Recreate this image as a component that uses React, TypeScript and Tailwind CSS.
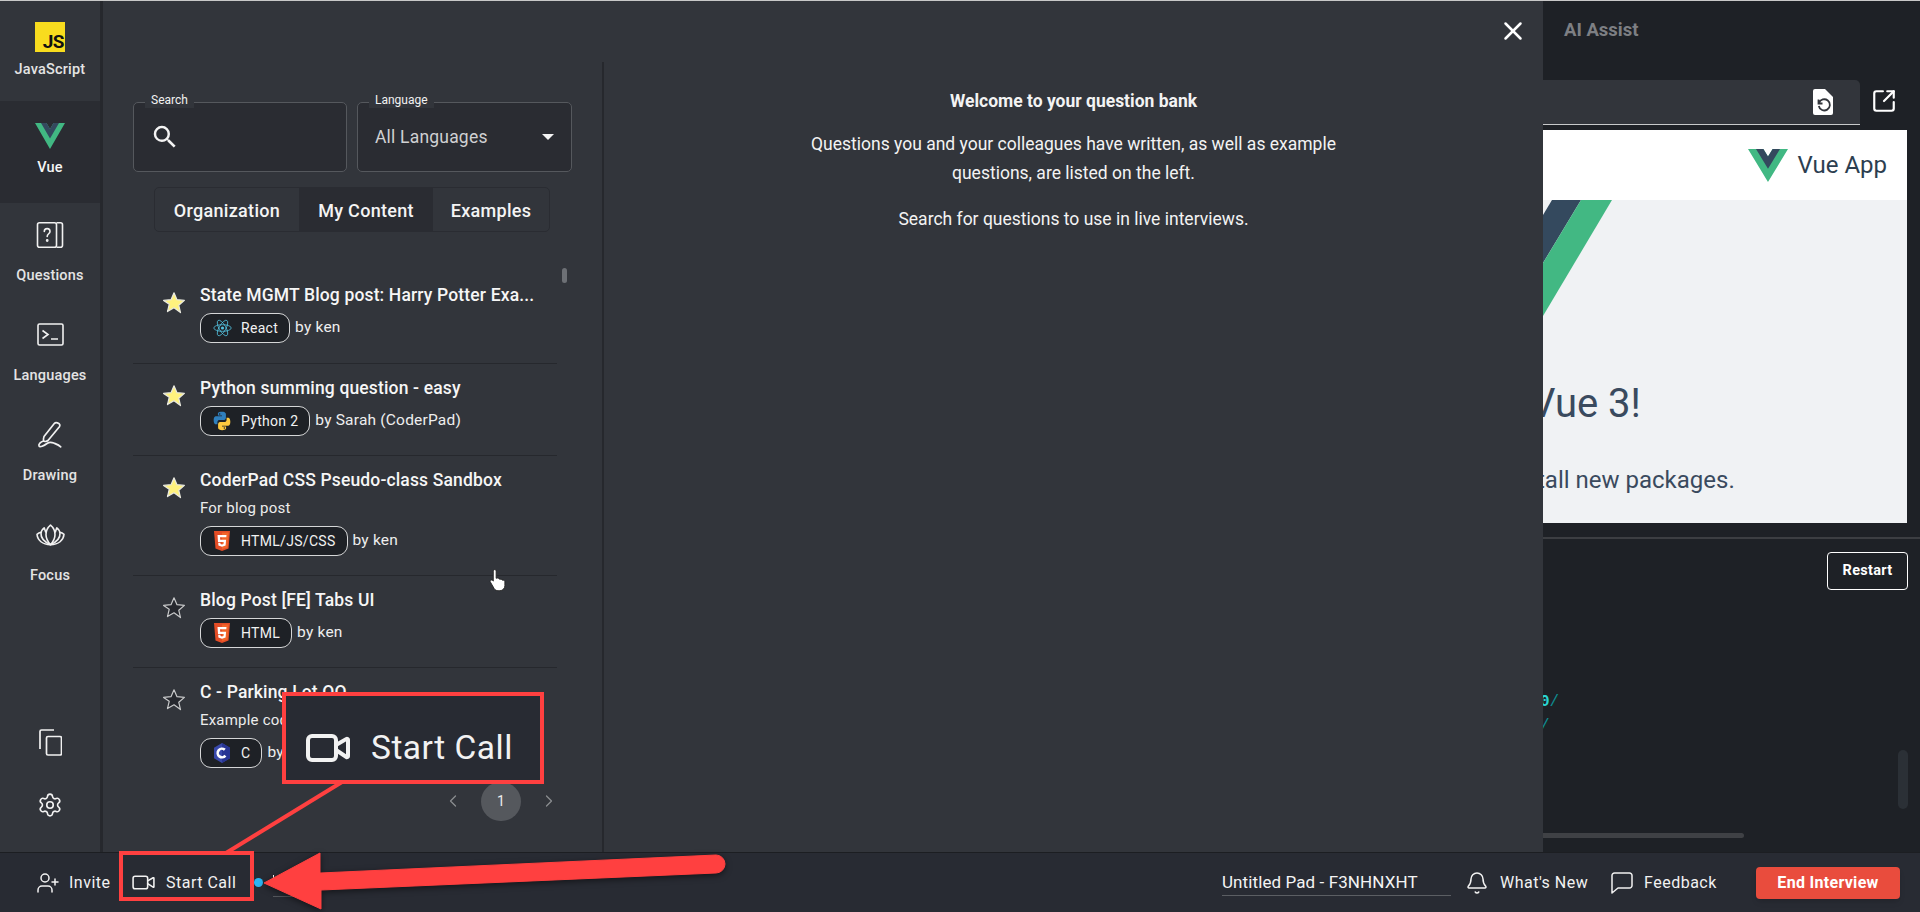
import React from "react";
import { X, UserPlus, Video, Bell, Settings, ChevronLeft, ChevronRight, SquareArrowOutUpRight } from "lucide-react";

const VueLogo = ({ w, h }: { w: number; h: number }) => (
  <svg width={w} height={h} viewBox="0 0 261.76 226.69" preserveAspectRatio="none">
    <path d="M161.096.001l-30.225 52.351L100.647.001H-.005l130.876 226.688L261.749.001z" fill="#41b883" />
    <path d="M161.096.001l-30.225 52.351L100.647.001H52.346l78.525 136.01L209.398.001z" fill="#34495e" />
  </svg>
);

const Star = ({ on }: { on: boolean }) => (
  <svg width="24" height="24" viewBox="0 0 24 24" className="mt-[7px] ml-[-1px] shrink-0">
    <path
      d="M12 1.8l3 6.9 7.4.7-5.6 4.9 1.7 7.3L12 16.8l-6.5 3.8 1.7-7.3L1.6 9.4 9 8.7z"
      fill={on ? "#fff27e" : "#26282e"}
      stroke={on ? "#e9e9e0" : "#c9cacb"}
      strokeWidth="1.2"
      strokeLinejoin="round"
    />
  </svg>
);

const ReactIcon = () => (
  <svg width="19" height="18" viewBox="-12 -11 24 22" fill="none" stroke="#53c1de" strokeWidth="1">
    <circle r="2" fill="#53c1de" stroke="none" />
    <ellipse rx="11" ry="4.2" />
    <ellipse rx="11" ry="4.2" transform="rotate(60)" />
    <ellipse rx="11" ry="4.2" transform="rotate(120)" />
  </svg>
);

const PythonIcon = () => (
  <svg width="20" height="20" viewBox="0 0 24 24">
    <path d="M11.9 1C6.8 1 7.1 3.2 7.1 3.2v2.3H12v.7H5.2S2 5.8 2 11s2.8 5 2.8 5h1.7v-2.4s-.1-2.8 2.8-2.8h4.8s2.6 0 2.6-2.6V3.8S16.700 1 11.900 1zM9.200 2.600a.9.9 0 110 1.800.9.9 0 010-1.800z" fill="#2f7fbd" />
    <path d="M12.100 23c5.100 0 4.800-2.200 4.800-2.200v-2.300H12v-.7h6.800S22 18.200 22 13s-2.800-5-2.800-5h-1.700v2.400s.1 2.800-2.800 2.800H9.900s-2.600 0-2.600 2.600v4.400S7.300 23 12.100 23zm2.700-1.600a.9.9 0 110-1.800.9.9 0 010 1.800z" fill="#fdc93f" />
  </svg>
);

const HtmlIcon = () => (
  <svg width="18" height="20" viewBox="0 0 18 20">
    <path d="M1 0h16l-1.500 17.500L9 20l-6.500-2.500z" fill="#e44d26" />
    <path d="M9 1.500h6.600l-1.200 14.900L9 18.300z" fill="#f16529" />
    <path d="M4.500 4h9l-.2 2.300H7l.2 2.400h5.900l-.5 5.800L9 15.700l-3.600-1.200-.2-2.700h2.200l.1 1.200L9 13.500l1.500-.5.2-2.100H5z" fill="#fff" />
  </svg>
);

const CIcon = () => (
  <svg width="18" height="20" viewBox="0 0 18 20">
    <path d="M9 0l8 4.700v10.600L9 20l-8-4.700V4.700z" fill="#3949ab" />
    <path d="M9 0l8 4.700v10.600L9 20z" fill="#283593" />
    <circle cx="9" cy="10" r="4.300" fill="none" stroke="#fff" strokeWidth="2.600" strokeDasharray="20 7" transform="rotate(38 9 10)" />
  </svg>
);

const Badge = ({ icon, label }: { icon: React.ReactNode; label: string }) => (
  <span className="inline-flex h-[30px] items-center rounded-[11px] border border-[#d5d6d7] bg-[#1e2126] pl-[11px] pr-[11px] text-[14px] tracking-[0.3px] text-[#f1f1f1]">
    <span className="flex w-[20px] justify-center">{icon}</span>
    <span className="ml-[9px]">{label}</span>
  </span>
);

type Q = { title: string; on: boolean; desc?: string; icon: React.ReactNode; lang: string; by: string };

const questions: Q[] = [
  { title: "State MGMT Blog post: Harry Potter Exa...", on: true, icon: <ReactIcon />, lang: "React", by: "by ken" },
  { title: "Python summing question - easy", on: true, icon: <PythonIcon />, lang: "Python 2", by: "by Sarah (CoderPad)" },
  { title: "CoderPad CSS Pseudo-class Sandbox", on: true, desc: "For blog post", icon: <HtmlIcon />, lang: "HTML/JS/CSS", by: "by ken" },
  { title: "Blog Post [FE] Tabs UI", on: false, icon: <HtmlIcon />, lang: "HTML", by: "by ken" },
  { title: "C - Parking Lot OO", on: false, desc: "Example code", icon: <CIcon />, lang: "C", by: "by ken" },
];

const QuestionsIcon = () => (
  <svg width="28" height="28" viewBox="0 0 28 28" fill="none" stroke="#f1f1f1" strokeWidth="1.600">
    <rect x="1.500" y="1.800" width="19" height="24.500" rx="2" />
    <path d="M20.500 1.800h4a2 2 0 012 2v20.500a2 2 0 01-2 2h-4" />
    <path d="M8.300 10.500c0-3.800 5.700-3.800 5.700 0 0 2.300-2.800 2.300-2.800 5" strokeLinecap="round" />
    <circle cx="11.200" cy="19.500" r="0.600" fill="#f1f1f1" />
  </svg>
);

const TerminalIcon = () => (
  <svg width="27" height="23" viewBox="0 0 27 23" fill="none" stroke="#f1f1f1" strokeWidth="1.600">
    <rect x="1" y="1" width="25" height="21" rx="1.500" />
    <path d="M5.500 7.500l5.500 4-5.500 4M14 16h7" />
  </svg>
);

const DrawIcon = () => (
  <svg width="26" height="28" viewBox="0 0 26 28" fill="none" stroke="#f1f1f1" strokeWidth="1.700" strokeLinecap="round" strokeLinejoin="round">
    <path d="M7 15.500L17.500 2.300c1.200-1.300 4.800-.3 5.300 1.500.2.700 0 1.300-.4 1.900L11 19.500c-1.600 1.300-4 1.200-4.300.5-.4-.8-.2-3 .3-4.500z" />
    <path d="M6.500 20c-2.800 1-5.300 3.200-4.500 5 .8 1.700 5-.2 8-2.500 2.300-1.700 4.300-1.500 6.700-.5 2.700 1.100 5.300 2 7 3.800" />
  </svg>
);

const LotusIcon = () => (
  <svg width="29" height="22" viewBox="0 0 29 22" fill="none" stroke="#f1f1f1" strokeWidth="1.600" strokeLinejoin="round">
    <path d="M14.500 1.200c3 2.500 4.500 6 4.500 9.500s-1.800 7-4.500 10c-2.700-3-4.500-6.500-4.500-10s1.500-7 4.500-9.500z" />
    <path d="M9.800 8.500C9.300 6.800 8.800 5 8.200 3.800 6.500 5 5.200 7 5 9.500c-.2 3.500 2.500 8 9.500 11.200M19.200 8.500c.5-1.700 1-3.500 1.600-4.700 1.700 1.200 3 3.200 3.200 5.700.2 3.500-2.500 8-9.500 11.200" />
    <path d="M5 8.200C3.500 8.500 2.200 9.200 1 10.300c.5 6 5.500 10.400 13.500 10.400 8 0 13-4.400 13.500-10.400-1.200-1.100-2.500-1.800-4-2.100" />
  </svg>
);

const CopyIcon = () => (
  <svg width="23" height="27" viewBox="0 0 23 27" fill="none" stroke="#f1f1f1" strokeWidth="1.700" strokeLinejoin="round">
    <rect x="7.500" y="7.500" width="15" height="18.500" rx="1.500" />
    <path d="M1 20V2.500A1.500 1.500 0 012.500 1H15" />
  </svg>
);

const SearchIcon = () => (
  <svg width="30" height="30" viewBox="0 0 24 24" fill="#f4f4f4">
    <path d="M15.500 14h-.79l-.28-.27A6.471 6.471 0 0 0 16 9.500 6.500 6.500 0 1 0 9.500 16c1.610 0 3.090-.59 4.230-1.570l.27.28v.79l5 4.990L20.490 19l-4.990-5zm-6 0C7.010 14 5 11.990 5 9.500S7.010 5 9.500 5 14 7.010 14 9.500 11.990 14 9.500 14z" />
  </svg>
);

const FileReloadIcon = () => (
  <svg width="20" height="26" viewBox="0 0 20 26">
    <path d="M2 0h10l8 8v16a2 2 0 01-2 2H2a2 2 0 01-2-2V2a2 2 0 012-2z" fill="#fff" />
    <path d="M5.500 10.500v4h4M6 14a5.600 5.600 0 11-.2 3" fill="none" stroke="#32353b" strokeWidth="1.800" />
  </svg>
);

const FeedbackIcon = () => (
  <svg width="22" height="22" viewBox="0 0 22 22" fill="none" stroke="#f1f1f1" strokeWidth="1.500" strokeLinejoin="round">
    <path d="M3.500 1h15a2.500 2.500 0 012.500 2.500v10a2.500 2.500 0 01-2.500 2.500H7L1 21V3.500A2.500 2.500 0 013.500 1z" />
  </svg>
);

const NavItem = ({ icon, label, active, h }: { icon: React.ReactNode; label: string; active?: boolean; h: string }) => (
  <div className={`flex flex-col items-center justify-start ${h} ${active ? "bg-[#2a2c32] text-[#f5f5f5]" : "text-[#e4e4e4]"}`}>
    {icon}
    <span className="text-[14.500px] leading-[20px] tracking-[0.2px] font-medium">{label}</span>
  </div>
);

export default function App() {
  return (
    <div className="relative flex h-[912px] w-[1920px] flex-col overflow-hidden bg-[#1e2126] font-[Roboto,sans-serif] text-[#f4f4f4]">
      <div className="h-px shrink-0 bg-[#c8c8c8]" />
      <div className="flex min-h-0 flex-1">
        {/* Question bank modal */}
        <div className="flex w-[1543px] shrink-0 bg-[#32353b]">
          <aside className="flex w-[103px] shrink-0 flex-col border-r-[3px] border-[#26282d]">
            <NavItem
              h="h-[100px] pt-[21px]"
              label="JavaScript"
              icon={
                <div className="mb-[8px] flex h-[30px] w-[30px] items-end justify-end bg-[#f8dc1e] pb-[1px] pr-[1px] text-[19px] font-bold leading-[19px] tracking-[-0.5px] text-[#111]">
                  JS
                </div>
              }
            />
            <NavItem
              active
              h="h-[102px] pt-[22px]"
              label="Vue"
              icon={
                <div className="mb-[9px]">
                  <VueLogo w={30} h={26} />
                </div>
              }
            />
            <NavItem h="h-[101px] pt-[18px]" label="Questions" icon={<div className="mb-[17px]"><QuestionsIcon /></div>} />
            <NavItem h="h-[100px] pt-[19px]" label="Languages" icon={<div className="mb-[20px]"><TerminalIcon /></div>} />
            <NavItem h="h-[100px] pt-[17px]" label="Drawing" icon={<div className="mb-[17px]"><DrawIcon /></div>} />
            <NavItem h="h-[100px] pt-[20px]" label="Focus" icon={<div className="mb-[20px]"><LotusIcon /></div>} />
            <div className="mt-auto mb-[34px] flex flex-col items-center gap-[36px]">
              <CopyIcon />
              <Settings size={26} strokeWidth={1.5} className="text-[#f1f1f1]" />
            </div>
          </aside>

          <section className="flex w-[499px] shrink-0 flex-col pl-[30px] pt-[101px]">
            <div className="flex gap-[10px]">
              <div className="relative flex h-[70px] w-[214px] items-center rounded-[5px] border border-[#55585d] bg-[#2a2c32] pl-[16px]">
                <span className="absolute left-[11px] top-[-10px] bg-[#32353b] px-[6px] text-[12px] leading-[15px] text-[#f1f1f1]">Search</span>
                <SearchIcon />
              </div>
              <div className="relative flex h-[70px] w-[215px] items-center justify-between rounded-[5px] border border-[#55585d] bg-[#2a2c32] pl-[17px] pr-[17px]">
                <span className="absolute left-[11px] top-[-10px] bg-[#32353b] px-[6px] text-[12px] leading-[15px] text-[#f1f1f1]">Language</span>
                <span className="text-[17.500px] tracking-[0.2px] text-[#d0d1d3]">All Languages</span>
                <span className="h-0 w-0 border-x-[6px] border-t-[6px] border-x-transparent border-t-[#f4f4f4]" />
              </div>
            </div>

            <div className="ml-[21px] mt-[15px] flex h-[45px] w-[396px] rounded-[5px] border border-[#2a2c32] pb-0 text-[18px] font-medium tracking-[0.3px] text-[#f4f4f4]">
              <div className="flex w-[144px] items-center justify-center pt-[2px]">Organization</div>
              <div className="flex w-[134px] items-center justify-center bg-[#2a2c32] pt-[2px]">My Content</div>
              <div className="flex flex-1 items-center justify-center pt-[2px]">Examples</div>
            </div>

            <div className="relative mt-[39px] h-[511px] w-[424px]">
              <div className="absolute left-[429px] top-[-3px] h-[15px] w-[5px] rounded-full bg-[#6d7075]" />
              <div className="h-full overflow-hidden">
                {questions.map((q, i) => (
                  <div key={q.title} className={`flex gap-[14px] pl-[30px] pr-[10px] pt-[13px] ${i === 0 ? "pb-[20px]" : "pb-[19px]"} ${i < 4 ? "border-b border-[#26282d]" : ""}`}>
                    <Star on={q.on} />
                    <div className="flex min-w-0 flex-col gap-[7px]">
                      <div className="whitespace-nowrap text-[17.500px] font-medium leading-[22px] tracking-[0.15px] text-[#f6f6f6]">{q.title}</div>
                      {q.desc && <div className="text-[15px] leading-[21px] tracking-[0.2px] text-[#ececec]">{q.desc}</div>}
                      <div className="flex items-center gap-[5px] text-[15.500px] tracking-[0.2px] text-[#eeeeee]">
                        <Badge icon={q.icon} label={q.lang} />
                        <span className="whitespace-nowrap">{q.by}</span>
                      </div>
                    </div>
                  </div>
                ))}
              </div>
            </div>

            <div className="flex h-[38px] w-[426px] items-center justify-end">
              <ChevronLeft size={20} strokeWidth={1.500} className="text-[#8b8d90]" />
              <span className="mx-[18px] flex h-[39px] w-[40px] items-center justify-center rounded-full bg-[#55585d] text-[14px] text-[#eeeeee]">1</span>
              <ChevronRight size={20} strokeWidth={1.500} className="text-[#8b8d90]" />
            </div>
          </section>

          <section className="relative flex min-w-0 flex-1 pt-[61px]">
            <div className="w-[2px] shrink-0 bg-[#26282d]" />
            <div className="flex flex-1 flex-col items-center pt-[25px] text-center text-[17.500px] leading-[29px] text-[#f3f3f3]">
              <div className="text-[17.500px] font-bold">Welcome to your question bank</div>
              <div className="mt-[14px] w-[560px]">
                Questions you and your colleagues have written, as well as example questions, are listed on the left.
              </div>
              <div className="mt-[17px]">Search for questions to use in live interviews.</div>
            </div>
            <X size={30} strokeWidth={2} className="absolute right-[15px] top-[15px] text-white" />
          </section>
        </div>

        {/* Right, behind the modal */}
        <div className="relative flex min-w-0 flex-1 flex-col overflow-hidden">
          <div className="flex h-[79px] shrink-0 items-start pl-[21px] pt-[18px] text-[18.500px] font-bold leading-[22px] text-[#7d7f83]">AI Assist</div>
          <div className="flex h-[45px] shrink-0">
            <div className="flex w-[317px] items-center justify-end rounded-tr-[5px] border-b border-[#c8c9ca] bg-[#32353b] pr-[27px]">
              <FileReloadIcon />
            </div>
            <SquareArrowOutUpRight size={26} strokeWidth={2} className="ml-[11px] mt-[8px] text-white" />
          </div>
          <div className="mt-[5px] flex h-[393px] w-[364px] shrink-0 flex-col">
            <div className="flex h-[70px] shrink-0 items-center justify-end gap-[10px] bg-white pr-[20px] text-[24px] text-[#2c3e50]">
              <VueLogo w={40} h={33} />
              <span>Vue App</span>
            </div>
            <div className="relative flex-1 bg-[#f0f2f4] text-[#3a4a5e]">
              <svg width="70" height="118" viewBox="0 0 70 118" className="absolute left-0 top-0">
                <polygon points="9,0 38,0 0,63 0,15" fill="#34495e" />
                <polygon points="38,0 69,0 0,116 0,63" fill="#42b883" />
              </svg>
              <div className="ml-[-13px] pt-[181px] text-[40px] leading-[46px] whitespace-nowrap">Vue 3!</div>
              <div className="ml-[-6px] mt-[39px] text-[24px] leading-[28px] whitespace-nowrap">tall new packages.</div>
            </div>
          </div>
          <div className="mt-[14px] h-[2px] shrink-0 bg-[#3c3e42]" />
          <div className="relative flex-1">
            <div className="flex justify-end pr-[12px] pt-[13px]">
              <div className="flex h-[38px] w-[81px] items-center justify-center rounded-[4px] border border-white text-[14.500px] font-bold tracking-[0.3px] text-white">Restart</div>
            </div>
            <div className="mt-[100px] font-['Liberation_Mono',monospace] text-[16px] leading-[24px]">
              <div className="ml-[-3px] font-bold text-[#2ad4d4]">
                0<span className="font-normal text-[#0e8c90]">/</span>
              </div>
              <div className="ml-[-3px] text-[#0e8c90]">/</div>
            </div>
            <div className="absolute right-[12px] top-[211px] h-[59px] w-[10px] rounded-[5px] bg-[#2b3036]" />
            <div className="absolute left-0 top-[294px] h-[5px] w-[201px] rounded-r-full bg-[#3f4145]" />
          </div>
        </div>
      </div>

      {/* Footer */}
      <footer className="flex h-[60px] shrink-0 items-center border-t border-[#1c1e22] bg-[#282b33] pl-[36px] pr-[20px] text-[16px] tracking-[0.5px] text-[#f2f2f2]">
        <UserPlus size={24} strokeWidth={1.500} className="shrink-0" />
        <span className="ml-[9px] w-[41px] whitespace-nowrap">Invite</span>
        <Video size={25} strokeWidth={1.500} className="ml-[21px] shrink-0" />
        <span className="ml-[10px] w-[70px] whitespace-nowrap">Start Call</span>
        <span className="ml-[18px] h-[9px] w-[9px] shrink-0 rounded-full bg-[#2bb5f2]" />
        <div className="ml-[10px] mb-[15px] h-[24px] w-[40px] shrink-0 self-end border-b border-[#55585d] pt-[2px]">
          <div className="h-[8px] w-[1px] bg-white" />
        </div>
        <div className="ml-[909px] w-[229px] shrink-0 border-b border-[#5b5e63] pb-[1px] text-[17px] leading-[24px] tracking-[0.1px] text-[#f4f4f4]">Untitled Pad - F3NHNXHT</div>
        <Bell size={24} strokeWidth={1.500} className="ml-[14px] shrink-0" />
        <span className="ml-[11px] w-[88px] whitespace-nowrap">What's New</span>
        <div className="ml-[23px] shrink-0"><FeedbackIcon /></div>
        <span className="ml-[11px] whitespace-nowrap">Feedback</span>
        <div className="ml-auto flex h-[32px] w-[144px] shrink-0 items-center justify-center rounded-[4px] bg-[#e94c3d] text-[16px] font-bold tracking-[0.3px] text-white shadow-md">End Interview</div>
      </footer>

      {/* Annotations over the screenshot */}
      <svg width="1920" height="912" className="pointer-events-none absolute left-0 top-0">
        <line x1="342" y1="782" x2="226" y2="853" stroke="#ff4040" strokeWidth="4" />
        <path
          d="M264 883 L320 853 L320 873 L716 855 A9 9 0 0 1 716 873 L321 890 L321 909 Z"
          fill="#ff4040"
          stroke="#ff4040"
          strokeLinejoin="round"
          style={{ filter: "drop-shadow(0 2px 3px rgba(0,0,0,.5))" }}
        />
      </svg>
      <div className="absolute left-[119px] top-[851px] h-[50px] w-[135px] border-[4px] border-[#ff4040]" />
      <div className="absolute left-[282px] top-[692px] flex h-[92px] w-[262px] items-center border-[4px] border-[#ff4040] bg-[#282b33] pl-[18px] pt-[20px] text-[33.500px] leading-[40px] tracking-[0.5px] text-[#f2f2f2]">
        <Video size={48} strokeWidth={2} className="shrink-0" />
        <span className="ml-[19px] whitespace-nowrap">Start Call</span>
      </div>
      <svg width="18" height="24" viewBox="0 0 16 22" className="absolute left-[489px] top-[568px]">
        <path d="M5 1.500c.8 0 1.300.6 1.300 1.400v6.500l.7-.1c.8-.2 1.800.1 2 .8l1 .2c.8-.2 1.500.2 1.700.7l.8.2c1-.2 1.800.5 1.800 1.400v3.500c0 2.500-2 4.700-4.500 4.700H8c-1.500 0-2.700-.7-3.500-1.900L1 12.800c-.5-.8 0-1.600.8-1.800.7-.1 1.300.3 1.900 1V2.900c0-.8.600-1.400 1.300-1.400z" fill="#fff" stroke="#222" strokeWidth="0.800" />
      </svg>
    </div>
  );
}
